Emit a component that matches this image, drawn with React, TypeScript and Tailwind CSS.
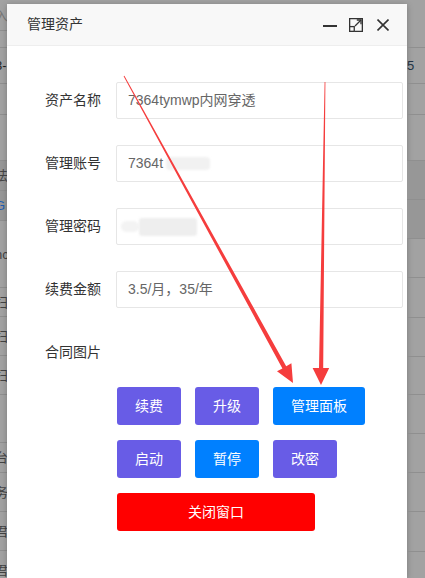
import React from "react";

type Row = { h: string; dark?: boolean; t?: string; c?: string };

const leftRows: Row[] = [
  { h: "h-[31px]", t: "入", c: "text-[#777]" },
  { h: "h-[17px]" },
  { h: "h-[36px]", t: "3-", c: "text-[#222]" },
  { h: "h-[31px]" },
  { h: "h-[46px]" },
  { h: "h-[30px]", dark: true, t: "法", c: "text-[#444]" },
  { h: "h-[30px]", dark: true, t: "G", c: "text-[#1e5fb4]" },
  { h: "h-[67px]", t: "nc", c: "text-[#444]" },
  { h: "h-[29px]", t: "扫", c: "text-[#444]" },
  { h: "h-[39px]", t: "扫", c: "text-[#444]" },
  { h: "h-[39px]", t: "扫", c: "text-[#444]" },
  { h: "h-[48px]", t: "f", c: "text-[#1e5fb4]" },
  { h: "h-[30px]", t: "台", c: "text-[#444]" },
  { h: "h-[39px]", t: "务", c: "text-[#444]" },
  { h: "h-[39px]", t: "君", c: "text-[#444]" },
  { h: "h-[39px]", t: "君", c: "text-[#444]" },
];

const rightRows: Row[] = [
  { h: "h-[48px]" },
  { h: "h-[36px]", t: "5", c: "text-[#234]" },
  { h: "h-[31px]" },
  { h: "h-[46px]" },
  { h: "h-[39px]", dark: true },
  { h: "h-[39px]", dark: true },
  { h: "h-[39px]" },
  { h: "h-[40px]" },
  { h: "h-[39px]" },
  { h: "h-[38px]" },
  { h: "h-[39px]" },
  { h: "h-[39px]" },
  { h: "h-[39px]" },
  { h: "h-[40px]" },
  { h: "h-[40px]" },
];

function Strip({ rows, width, shift }: { rows: Row[]; width: string; shift: string }) {
  return (
    <div className={`flex shrink-0 flex-col overflow-hidden ${width}`}>
      {rows.map((r, i) => (
        <div
          key={i}
          className={`flex shrink-0 items-center border-b border-[#8f8f8f] ${r.h} ${r.dark ? "bg-[#979797]" : ""}`}
        >
          {r.t ? (
            <span className={`whitespace-nowrap text-[13px] leading-none ${shift} ${r.c ?? ""}`}>{r.t}</span>
          ) : null}
        </div>
      ))}
    </div>
  );
}

function Field({ label, children }: { label: string; children?: React.ReactNode }) {
  return (
    <div className="flex h-[37px] items-center">
      <div className="w-[94px] text-right text-[14px] text-[#333]">{label}</div>
      {children !== undefined ? (
        <div className="ml-[15px] flex h-[37px] w-[287px] items-center rounded-[2px] border border-[#e6e6e6] pl-[11px] text-[14px] text-[#666]">
          {children}
        </div>
      ) : null}
    </div>
  );
}

function Btn({ w, bg, children }: { w: string; bg: string; children: React.ReactNode }) {
  return (
    <button className={`flex h-[38px] items-center justify-center rounded-[3px] text-[14px] text-white ${w} ${bg}`}>
      {children}
    </button>
  );
}

export default function App() {
  return (
    <div className="relative flex h-[578px] w-[425px] overflow-hidden bg-[#a2a2a2] font-['Liberation_Sans','Noto_Sans_CJK_SC',sans-serif]">
      <Strip rows={leftRows} width="w-[7px]" shift="-ml-[5px]" />
      <div className="flex w-[400px] shrink-0 flex-col pt-[4px]">
        <div className="flex flex-1 flex-col bg-white shadow-[0_1px_6px_rgba(0,0,0,0.25)]">
          <div className="flex h-[42px] items-center border-b border-[#eee] bg-[#f8f8f8] pl-[20px] pr-[18px]">
            <span className="text-[14px] text-[#333]">管理资产</span>
            <div className="ml-auto flex items-center">
              <svg width="14" height="14" viewBox="0 0 14 14" className="mt-[1px]">
                <path d="M0 8 H14" stroke="#333" strokeWidth="2" />
              </svg>
              <svg width="14" height="14" viewBox="0 0 14 14" className="ml-[12px]" fill="none" stroke="#333" strokeWidth="1.3">
                <path d="M0.65 8 V0.65 H13.35 V13.35 H5.5" />
                <rect x="0.65" y="8.6" width="4.6" height="4.75" />
                <path d="M6 8 L12 2" />
                <path d="M7.8 2 H12 V6.2" />
              </svg>
              <svg width="12" height="12" viewBox="0 0 12 12" className="ml-[14px]" stroke="#333" strokeWidth="1.6">
                <path d="M0.5 0.5 L11.5 11.5 M11.5 0.5 L0.5 11.5" />
              </svg>
            </div>
          </div>
          <div className="flex flex-col gap-[26px] pt-[36px]">
            <Field label="资产名称">7364tymwp内网穿透</Field>
            <Field label="管理账号">
              <span>7364t</span>
              <div className="ml-[3px] h-[13px] w-[44px] rounded-[4px] bg-[#f1f1f1] blur-[1px]" />
            </Field>
            <Field label="管理密码">
              <div className="-ml-[7px] h-[11px] w-[18px] rounded-full bg-[#f3f3f3] blur-[1px]" />
              <div className="h-[18px] w-[58px] rounded-[3px] bg-[#eeeeee] blur-[1px]" />
            </Field>
            <Field label="续费金额">3.5/月，35/年</Field>
            <Field label="合同图片" />
          </div>
          <div className="mt-[16px] flex flex-col gap-[15px] pl-[110px]">
            <div className="flex gap-[14px]">
              <Btn w="w-[64px]" bg="bg-[#685ce6]">续费</Btn>
              <Btn w="w-[64px]" bg="bg-[#685ce6]">升级</Btn>
              <Btn w="w-[92px]" bg="bg-[#0080ff]">管理面板</Btn>
            </div>
            <div className="flex gap-[14px]">
              <Btn w="w-[64px]" bg="bg-[#685ce6]">启动</Btn>
              <Btn w="w-[64px]" bg="bg-[#0080ff]">暂停</Btn>
              <Btn w="w-[64px]" bg="bg-[#685ce6]">改密</Btn>
            </div>
            <div className="flex">
              <Btn w="w-[198px]" bg="bg-[#ff0000]">关闭窗口</Btn>
            </div>
          </div>
        </div>
      </div>
      <Strip rows={rightRows} width="flex-1" shift="ml-0" />
      <svg className="pointer-events-none absolute left-0 top-0" width="425" height="578" viewBox="0 0 425 578">
        <polygon
          fill="#f53d3d"
          points="123.6,76.2 282.4,368.4 277.0,371.3 293,383 291.4,363.2 286.2,366.3 124.4,75.8"
        />
        <polygon
          fill="#f53d3d"
          points="324.6,82 319.0,368 312.6,368 321,385 329.2,368 323.2,368 325.4,82"
        />
      </svg>
    </div>
  );
}
